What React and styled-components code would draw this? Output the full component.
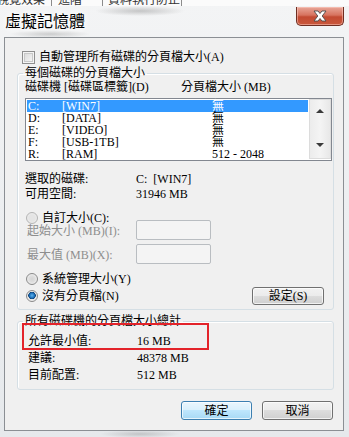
import React from "react";
import styled, { createGlobalStyle } from "styled-components";

const GlobalStyle = createGlobalStyle`
  html, body { margin: 0; padding: 0; }
  body {
    width: 349px;
    height: 437px;
    overflow: hidden;
    font-family: "Liberation Serif", "Noto Sans CJK TC", serif;
    font-size: 12px;
    color: #000;
  }
`;

const Window = styled.div`
  width: 349px;
  height: 437px;
  display: flex;
  flex-direction: column;
  background:
    radial-gradient(ellipse 45px 5px at 140px 11px, rgba(110, 110, 110, 0.35), transparent),
    radial-gradient(ellipse 40px 4px at 50px 34px, rgba(110, 110, 110, 0.3), transparent),
    radial-gradient(ellipse 40px 4px at 140px 434px, rgba(110, 110, 110, 0.3), transparent),
    linear-gradient(#f3f4f5, #e6e9ec);
`;

const TabStrip = styled.div`
  height: 6px;
  overflow: hidden;
  display: flex;
  align-items: flex-end;
  background: #fbfbfb;
`;

const Tab = styled.div`
  flex: none;
  width: ${(p) => p.$w}px;
  padding-left: ${(p) => p.$pl}px;
  box-sizing: border-box;
  height: 12px;
  line-height: 12px;
  white-space: nowrap;
  color: #333;
  border-right: 1px solid #8c8c8c;
  &:first-child { margin-left: -9px; }
`;

const TitleBar = styled.div`
  height: 31px;
  display: flex;
  align-items: flex-start;
`;

const Title = styled.div`
  margin: 6px 0 0 5px;
  font-family: "Noto Sans CJK TC", sans-serif;
  font-size: 16px;
  line-height: 16px;
  color: #000;
  text-shadow: 0 0 6px #fff, 0 0 10px #fff;
`;

const CloseButton = styled.div`
  margin: 1px 5px 0 auto;
  width: 48px;
  height: 19px;
  box-sizing: border-box;
  border: 1px solid #6e2e22;
  border-top: none;
  border-radius: 0 0 5px 5px;
  background: linear-gradient(#e9a799 0%, #d7735f 45%, #c34a32 55%, #c9583c 100%);
  box-shadow: inset 0 0 0 1px rgba(255, 210, 200, 0.5);
  display: flex;
  align-items: center;
  justify-content: center;
`;

const Client = styled.div`
  margin: 0 5px 0 4px;
  height: 394px;
  box-sizing: border-box;
  border: 1px solid #8b8f94;
  background: #f0f0f0;
  padding: 0 10px 0 12px;
  display: flex;
  flex-direction: column;
`;

const CheckRow = styled.label`
  margin-top: 13px;
  height: 13px;
  padding-left: 5px;
  display: flex;
  align-items: center;
  gap: 4px;
  line-height: 13px;
`;

const CheckBox = styled.span`
  width: 13px;
  height: 13px;
  box-sizing: border-box;
  border: 1px solid #8f8f8f;
  background: #fff;
  box-shadow: inset 0 0 0 1px #f4f4f4, inset 0 0 0 2px #c8c8c8;
  background-image: linear-gradient(135deg, #d6d6d6, #fafafa);
`;

const Group = styled.fieldset`
  margin: ${(p) => p.$top}px 0 0;
  width: 317px;
  box-sizing: border-box;
  padding: 0 0 ${(p) => p.$bottom}px 7px;
  border: 1px solid #d5dfe5;
  border-radius: 3px;
  box-shadow: inset 1px 1px 0 #fff;
  min-width: 0;
`;

const Legend = styled.legend`
  padding: 0 2px;
  margin-left: -2px;
  line-height: 12px;
  font-size: 12px;
`;

const Header = styled.div`
  margin-top: 1px;
  display: flex;
  line-height: 14px;
  height: 14px;
`;

const HeaderCol = styled.span`
  width: ${(p) => p.$w || "auto"};
  white-space: nowrap;
`;

const ListBox = styled.div`
  margin-top: 4px;
  width: 307px;
  height: 63px;
  box-sizing: border-box;
  border: 1px solid #828790;
  background: #fff;
  display: flex;
`;

const Rows = styled.div`
  flex: 1;
  padding: 1px 0 0 1px;
`;

const Row = styled.div`
  width: 281px;
  height: 12px;
  line-height: 12px;
  display: flex;
  white-space: nowrap;
  background: ${(p) => (p.$selected ? "#3399ff" : "transparent")};
  color: ${(p) => (p.$selected ? "#fff" : "#000")};
`;

const Cell = styled.span`
  flex: none;
  width: ${(p) => p.$w}px;
  padding-left: ${(p) => p.$pl || 0}px;
`;

const ScrollBar = styled.div`
  width: 22px;
  box-sizing: border-box;
  margin: 0 0 1px;
  border: 1px solid #dcdcdc;
  background: linear-gradient(90deg, #ececec, #f4f4f4 50%, #e8e8e8);
  display: flex;
  flex-direction: column;
  align-items: center;
  justify-content: space-between;
  padding: 9px 0 11px;
`;

const Arrow = styled.span`
  width: 0;
  height: 0;
  border-left: 4px solid transparent;
  border-right: 4px solid transparent;
  ${(p) => (p.$down ? "border-top: 4px solid #3a3a3a;" : "border-bottom: 4px solid #3a3a3a;")}
`;

const InfoGrid = styled.div`
  margin-top: 11px;
  display: grid;
  grid-template-columns: 111px auto;
  line-height: 15px;
`;

const RadioRow = styled.div`
  margin-top: ${(p) => p.$top}px;
  height: ${(p) => p.$h || 12}px;
  padding-left: 1px;
  display: flex;
  align-items: center;
  gap: 4px;
  line-height: 12px;
  color: ${(p) => (p.$disabled ? "#6d6d6d" : "#000")};
`;

const Radio = styled.span`
  flex: none;
  width: 12px;
  height: 12px;
  box-sizing: border-box;
  border-radius: 50%;
  border: 1px solid ${(p) => (p.$disabled ? "#b4b4b4" : "#8a8a8a")};
  background: ${(p) =>
    p.$checked
      ? "radial-gradient(circle at 50% 45%, #5fb4ee 0, #1c6fb9 2.5px, #0d3f74 3.5px, #e6e6e6 4px, #fafafa 100%)"
      : p.$disabled
      ? "radial-gradient(circle, #e4e4e4 0, #e4e4e4 3px, #f2f2f2 100%)"
      : "radial-gradient(circle, #d4d4d4 0, #dedede 3px, #fbfbfb 100%)"};
`;

const Spacer = styled.span`
  flex: 1;
`;

const FieldRow = styled.div`
  margin-top: ${(p) => p.$top}px;
  height: 20px;
  padding-left: 2px;
  display: flex;
  align-items: center;
  color: #8e8e8e;
`;

const FieldLabel = styled.span`
  width: 109px;
  white-space: nowrap;
`;

const Input = styled.div`
  width: 75px;
  height: 20px;
  box-sizing: border-box;
  border: 1px solid #b9bdc1;
  border-radius: 2px;
  background: #f4f4f4;
`;

const Button = styled.div`
  flex: none;
  width: ${(p) => p.$w || 71}px;
  height: ${(p) => p.$h || 19}px;
  margin-right: ${(p) => p.$mr || 0}px;
  box-sizing: border-box;
  border: 1px solid ${(p) => (p.$default ? "#3c7fb1" : "#707070")};
  border-radius: 3px;
  background: ${(p) =>
    p.$default
      ? "linear-gradient(#eaf6fd 0%, #d9f0fc 50%, #bee6fd 50%, #a7d9f5 100%)"
      : "linear-gradient(#f2f2f2 0%, #ebebeb 50%, #dddddd 50%, #cfcfcf 100%)"};
  box-shadow: inset 0 0 0 1px rgba(255, 255, 255, 0.7);
  display: flex;
  align-items: center;
  justify-content: center;
  line-height: 12px;
`;

const Totals = styled.div`
  margin-top: 6px;
  position: relative;
  padding-left: 3px;
`;

const TotalRow = styled.div`
  display: grid;
  grid-template-columns: 109px auto;
  height: 17px;
  line-height: 17px;
`;

const Highlight = styled.div`
  position: absolute;
  top: -10px;
  left: -3px;
  width: 187px;
  height: 27px;
  box-sizing: border-box;
  border: 2px solid #e3232a;
`;

const ButtonRow = styled.div`
  margin-top: 11px;
  display: flex;
  justify-content: flex-end;
  gap: 10px;
`;

const drives = [
  { letter: "C:", label: "[WIN7]", size: "無", selected: true },
  { letter: "D:", label: "[DATA]", size: "無" },
  { letter: "E:", label: "[VIDEO]", size: "無" },
  { letter: "F:", label: "[USB-1TB]", size: "無" },
  { letter: "R:", label: "[RAM]", size: "512 - 2048" },
];

const totals = [
  ["允許最小值:", "16 MB"],
  ["建議:", "48378 MB"],
  ["目前配置:", "512 MB"],
];

export default function App() {
  return (
    <Window>
      <GlobalStyle />
      <TabStrip>
        <Tab $w={61} $pl={6}>視覺效果</Tab>
        <Tab $w={51} $pl={6}>進階</Tab>
        <Tab $w={79} $pl={5}>資料執行防止</Tab>
      </TabStrip>
      <TitleBar>
        <Title>虛擬記憶體</Title>
        <CloseButton>
          <svg width="16" height="12" viewBox="0 0 16 12">
            <path
              d="M2 1 H6 L8 3.5 L10 1 H14 L10.2 6 L14 11 H10 L8 8.5 L6 11 H2 L5.8 6 Z"
              fill="#fff"
              stroke="#4a4a4a"
              strokeWidth="0.9"
              strokeLinejoin="round"
            />
          </svg>
        </CloseButton>
      </TitleBar>
      <Client>
        <CheckRow>
          <CheckBox />
          <span>自動管理所有磁碟的分頁檔大小(A)</span>
        </CheckRow>
        <Group $top={3} $bottom={4}>
          <Legend>每個磁碟的分頁檔大小</Legend>
          <Header>
            <HeaderCol $w="156px">磁碟機 [磁碟區標籤](D)</HeaderCol>
            <HeaderCol>分頁檔大小 (MB)</HeaderCol>
          </Header>
          <ListBox>
            <Rows>
              {drives.map((d) => (
                <Row key={d.letter} $selected={d.selected}>
                  <Cell $w={34} $pl={1}>{d.letter}</Cell>
                  <Cell $w={150}>{d.label}</Cell>
                  <Cell $w={90}>{d.size}</Cell>
                </Row>
              ))}
            </Rows>
            <ScrollBar>
              <Arrow />
              <Arrow $down />
            </ScrollBar>
          </ListBox>
          <InfoGrid>
            <span>選取的磁碟:</span>
            <span>C:&nbsp; [WIN7]</span>
            <span>可用空間:</span>
            <span>31946 MB</span>
          </InfoGrid>
          <RadioRow $top={10}>
            <Radio $disabled />
            <span>自訂大小(C):</span>
          </RadioRow>
          <FieldRow $top={-4}>
            <FieldLabel>起始大小 (MB)(I):</FieldLabel>
            <Input />
          </FieldRow>
          <FieldRow $top={4}>
            <FieldLabel>最大值 (MB)(X):</FieldLabel>
            <Input />
          </FieldRow>
          <RadioRow $top={9}>
            <Radio />
            <span>系統管理大小(Y)</span>
          </RadioRow>
          <RadioRow $top={2} $h={18}>
            <Radio $checked />
            <span>沒有分頁檔(N)</span>
            <Spacer />
            <Button $w={72} $h={18} $mr={9}>設定(S)</Button>
          </RadioRow>
        </Group>
        <Group $top={5} $bottom={5}>
          <Legend>所有磁碟機的分頁檔大小總計</Legend>
          <Totals>
            {totals.map(([label, value]) => (
              <TotalRow key={label}>
                <span>{label}</span>
                <span>{value}</span>
              </TotalRow>
            ))}
            <Highlight />
          </Totals>
        </Group>
        <ButtonRow>
          <Button $default>確定</Button>
          <Button>取消</Button>
        </ButtonRow>
      </Client>
    </Window>
  );
}
